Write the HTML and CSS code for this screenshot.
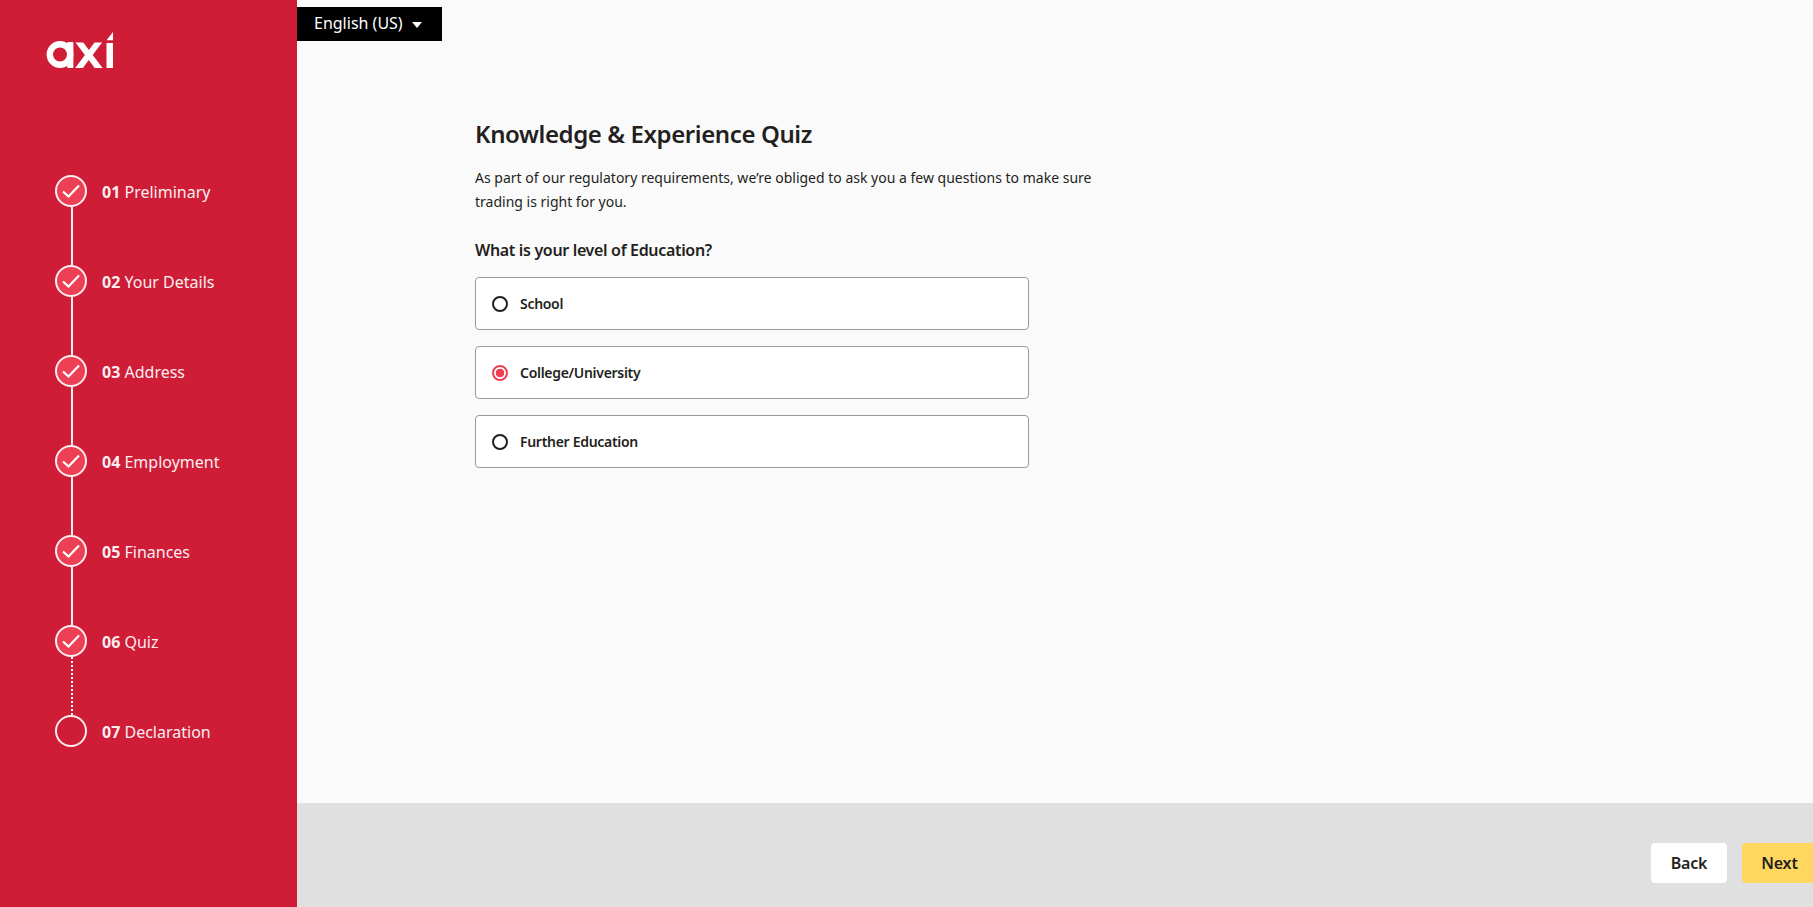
FILE: index.html
```html
<!DOCTYPE html>
<html lang="en">
<head>
<meta charset="utf-8">
<title>Knowledge &amp; Experience Quiz</title>
<link rel="stylesheet" href="styles.css">
</head>
<body>
<div class="app">
  <aside class="sidebar">
    <svg class="logo" viewBox="0 0 67 36" width="67" height="36" aria-label="axi">
      <circle cx="14" cy="22.5" r="10.2" fill="none" stroke="#fff" stroke-width="6.4"/>
      <rect x="21.2" y="10" width="6.2" height="26" rx="1" fill="#fff"/>
      <path d="M29.5 10.5h7.8l5.6 7.6 5.6-7.6h7.6l-9.4 12.4 9.9 13h-7.9l-5.9-8-5.9 8h-7.7l9.7-13z" fill="#fff"/>
      <path d="M60.5 11h6.5v25h-6.5zM60.5 8.2 67 0v8.2z" fill="#fff"/>
    </svg>
    <ol class="steps">
      <li class="step">
        <div class="rail">
          <span class="dot done"><svg viewBox="0 0 32 32"><path d="M8 16.5l5.5 5L24 10.5"/></svg></span>
          <span class="link"></span>
        </div>
        <div class="step-label"><b>01</b> Preliminary</div>
      </li>
      <li class="step">
        <div class="rail">
          <span class="dot done"><svg viewBox="0 0 32 32"><path d="M8 16.5l5.5 5L24 10.5"/></svg></span>
          <span class="link"></span>
        </div>
        <div class="step-label"><b>02</b> Your Details</div>
      </li>
      <li class="step">
        <div class="rail">
          <span class="dot done"><svg viewBox="0 0 32 32"><path d="M8 16.5l5.5 5L24 10.5"/></svg></span>
          <span class="link"></span>
        </div>
        <div class="step-label"><b>03</b> Address</div>
      </li>
      <li class="step">
        <div class="rail">
          <span class="dot done"><svg viewBox="0 0 32 32"><path d="M8 16.5l5.5 5L24 10.5"/></svg></span>
          <span class="link"></span>
        </div>
        <div class="step-label"><b>04</b> Employment</div>
      </li>
      <li class="step">
        <div class="rail">
          <span class="dot done"><svg viewBox="0 0 32 32"><path d="M8 16.5l5.5 5L24 10.5"/></svg></span>
          <span class="link"></span>
        </div>
        <div class="step-label"><b>05</b> Finances</div>
      </li>
      <li class="step">
        <div class="rail">
          <span class="dot done"><svg viewBox="0 0 32 32"><path d="M8 16.5l5.5 5L24 10.5"/></svg></span>
          <span class="link dotted"></span>
        </div>
        <div class="step-label"><b>06</b> Quiz</div>
      </li>
      <li class="step">
        <div class="rail">
          <span class="dot"></span>
        </div>
        <div class="step-label"><b>07</b> Declaration</div>
      </li>
    </ol>
  </aside>
  <div class="main">
    <div class="content">
      <div class="lang"><span class="lang-text">English (US)</span><span class="caret"></span></div>
      <section class="quiz">
        <h1>Knowledge &amp; Experience Quiz</h1>
        <p class="intro">As part of our regulatory requirements, we’re obliged to ask you a few questions to make sure trading is right for you.</p>
        <h2>What is your level of Education?</h2>
        <div class="options">
          <div class="option"><span class="radio"></span>School</div>
          <div class="option"><span class="radio checked"></span>College/University</div>
          <div class="option"><span class="radio"></span>Further Education</div>
        </div>
      </section>
    </div>
    <footer class="footer">
      <button class="btn back">Back</button>
      <button class="btn next">Next</button>
    </footer>
  </div>
</div>
</body>
</html>
```
FILE: styles.css
```css
* { box-sizing: border-box; }
html, body { margin: 0; height: 100%; overflow: hidden; }
body { font-family: "Noto Sans", "Open Sans", sans-serif; color: #231f20; background: #fafafa; }
.app { display: flex; height: 907px; }

.sidebar { width: 297px; flex: none; background: #cf1c37; padding: 32px 0 0 46px; color: #fff; }
.logo { display: block; }
.steps { list-style: none; margin: 107px 0 0 9px; padding: 0; }
.step { display: flex; gap: 15px; height: 90px; }
.rail { display: flex; flex-direction: column; align-items: center; width: 32px; }
.dot { display: block; width: 32px; height: 32px; border: 2px solid #fbeef0; border-radius: 50%; flex: none; position: relative; }
.dot.done { background: #ee4054; }
.dot svg { position: absolute; inset: -2px; width: 32px; height: 32px; }
.dot path { fill: none; stroke: #fff; stroke-width: 2.2; }
.link { width: 2px; height: 58px; margin-left: 2px; background: #fbeef0; }
.link.dotted { background: repeating-linear-gradient(to bottom, #fff 0 2px, transparent 2px 4px); }
.step-label { font-size: 16px; line-height: 32px; height: 32px; padding-top: 1px; color: #fbeef0; }
.step-label b { font-weight: 700; }

.main { flex: 1; min-width: 0; display: flex; flex-direction: column; }
.content { height: 803px; flex: none; padding-top: 7px; }
.lang { display: flex; align-items: center; width: 145px; height: 34px; padding-left: 17px; background: #000; color: #fff; font-size: 16px; }
.lang-text { margin-top: -2px; }
.caret { margin-left: 9px; margin-top: 2px; border: 5px solid transparent; border-top: 6px solid #fff; border-bottom: 0; }

.quiz { width: 620px; margin: 0 0 0 178px; padding-top: 75px; }
h1 { margin: 0; font-size: 24px; font-weight: 600; line-height: 36px; letter-spacing: -0.4px; }
.intro { margin: 14px 0 0; font-size: 14px; line-height: 24px; }
h2 { margin: 24px 0 0; font-size: 16px; font-weight: 600; line-height: 24px; letter-spacing: -0.33px; }
.options { display: flex; flex-direction: column; gap: 16px; width: 554px; margin-top: 15px; }
.option { display: flex; align-items: center; height: 53px; padding-left: 16px; background: #fff; border: 1px solid #9a9a9a; border-radius: 4px; font-size: 14px; font-weight: 600; letter-spacing: -0.3px; }
.radio { width: 16px; height: 16px; margin-right: 12px; border: 2px solid #231f20; border-radius: 50%; flex: none; }
.radio.checked { border-color: #ee4054; background: radial-gradient(circle, #ee4054 0 4px, #fff 4.6px); }

.footer { flex: 1; display: flex; justify-content: flex-end; gap: 15px; padding-top: 40px; background: #e0e0e0; overflow: hidden; }
.btn { height: 40px; border: 0; border-radius: 4px; font: 600 16px "Noto Sans", sans-serif; letter-spacing: -0.2px; color: #231f20; flex: none; }
.back { width: 76px; background: #fff; }
.next { width: 75px; margin-right: -4px; background: #ffd75e; }
```
